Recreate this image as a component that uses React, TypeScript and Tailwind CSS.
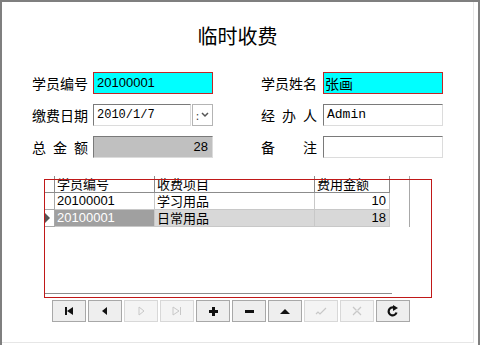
import React from "react";

const cjk = "font-['Noto_Sans_CJK_SC',sans-serif]";
const sans = "font-['Liberation_Sans','Noto_Sans_CJK_SC',sans-serif]";
const mono = "font-['Liberation_Mono',monospace]";

function Label({ chars }: { chars: string[] }) {
  return (
    <div className={`w-[56px] flex justify-between text-[14px] leading-none text-black ${cjk}`}>
      {chars.map((c, i) => (
        <span key={i}>{c}</span>
      ))}
    </div>
  );
}

const sunken =
  "h-[22px] border border-t-[#7a7a7a] border-l-[#7a7a7a] border-r-[#dcdcdc] border-b-[#dcdcdc] flex items-center";

function NavIcon({ kind }: { kind: string }) {
  const dark = "#111";
  const faint = "#c8c8c8";
  switch (kind) {
    case "first":
      return (
        <svg width="12" height="12" viewBox="0 0 12 12">
          <rect x="2" y="2" width="2" height="8" fill={dark} />
          <polygon points="10,2 4,6 10,10" fill={dark} />
        </svg>
      );
    case "prev":
      return (
        <svg width="12" height="12" viewBox="0 0 12 12">
          <polygon points="8,2 3,6 8,10" fill={dark} />
        </svg>
      );
    case "next":
      return (
        <svg width="12" height="12" viewBox="0 0 12 12">
          <polygon points="4,2 9,6 4,10" fill="none" stroke={faint} strokeWidth="1" />
        </svg>
      );
    case "last":
      return (
        <svg width="12" height="12" viewBox="0 0 12 12">
          <polygon points="2,2 8,6 2,10" fill="none" stroke={faint} strokeWidth="1" />
          <rect x="9" y="2" width="1" height="8" fill={faint} />
        </svg>
      );
    case "add":
      return (
        <svg width="12" height="12" viewBox="0 0 12 12">
          <rect x="5" y="2" width="3" height="9" fill={dark} />
          <rect x="2" y="5" width="9" height="3" fill={dark} />
        </svg>
      );
    case "del":
      return (
        <svg width="12" height="12" viewBox="0 0 12 12">
          <rect x="2" y="5" width="9" height="3" fill={dark} />
        </svg>
      );
    case "up":
      return (
        <svg width="12" height="12" viewBox="0 0 12 12">
          <polygon points="1,9 6,4 11,9" fill={dark} />
        </svg>
      );
    case "ok":
      return (
        <svg width="14" height="12" viewBox="0 0 14 12">
          <polyline points="2,9 4,7 6,9 12,3" fill="none" stroke={faint} strokeWidth="1.2" />
        </svg>
      );
    case "cancel":
      return (
        <svg width="12" height="12" viewBox="0 0 12 12">
          <path d="M2 2 L10 10 M10 2 L2 10" stroke={faint} strokeWidth="1.2" fill="none" />
          <path d="M3 2 L10 9 M9 2 L2 9" stroke="#e0e0e0" strokeWidth="1" fill="none" />
        </svg>
      );
    default:
      return (
        <svg width="12" height="12" viewBox="0 0 12 12">
          <path d="M9.5 7.5 A4 4 0 1 1 7 2.6" fill="none" stroke={dark} strokeWidth="2.2" />
          <polygon points="6,0 11,3 6,6" fill={dark} />
        </svg>
      );
  }
}

const buttons = [
  { k: "first", on: true },
  { k: "prev", on: true },
  { k: "next", on: false },
  { k: "last", on: false },
  { k: "add", on: true },
  { k: "del", on: true },
  { k: "up", on: true },
  { k: "ok", on: false },
  { k: "cancel", on: false },
  { k: "refresh", on: true },
];

const rows = [
  { id: "20100001", item: "学习用品", amt: "10", sel: false },
  { id: "20100001", item: "日常用品", amt: "18", sel: true },
];

export default function App() {
  return (
    <div className="w-[480px] h-[345px] bg-white border-t-2 border-l-2 border-r-2 border-[#7f7f7f]">
      <div className="w-[472px] h-[341px] border-r border-b border-[#e6e6e6] flex flex-col">
        {/* Title */}
        <div className={`mt-[21px] h-[26px] leading-[26px] text-center text-[20px] text-black ${cjk}`}>
          临时收费
        </div>

        {/* Form */}
        <div className="mt-[23px] flex flex-col gap-[10px] pl-[30px]">
          <div className="flex items-center">
            <Label chars={["学员编号"]} />
            <div className={`ml-[5px] w-[120px] h-[22px] bg-[#00ffff] border border-[#c02828] flex items-center px-[3px] text-[13px] ${sans}`}>
              20100001
            </div>
            <div className="ml-[48px]">
              <Label chars={["学员姓名"]} />
            </div>
            <div className={`ml-[6px] w-[120px] h-[22px] bg-[#00ffff] border border-[#c02828] flex items-center px-[1px] text-[14px] ${cjk}`}>
              张画
            </div>
          </div>

          <div className="flex items-center">
            <Label chars={["缴费日期"]} />
            <div className={`ml-[5px] w-[98px] bg-white px-[3px] text-[12px] ${mono} ${sunken}`}>2010/1/7</div>
            <div className="ml-[1px] w-[21px] h-[22px] bg-white border border-[#b4b4b4] flex items-center justify-center gap-[2px] text-[11px] text-[#333]">
              <span className="leading-none">:</span>
              <svg width="8" height="6" viewBox="0 0 8 6">
                <polyline points="1,1 4,4 7,1" fill="none" stroke="#555" strokeWidth="1.5" />
              </svg>
            </div>
            <div className="ml-[48px]">
              <Label chars={["经", "办", "人"]} />
            </div>
            <div className={`ml-[6px] w-[120px] bg-white px-[3px] text-[13px] ${mono} ${sunken}`}>Admin</div>
          </div>

          <div className="flex items-center">
            <Label chars={["总", "金", "额"]} />
            <div className={`ml-[5px] w-[120px] bg-[#c0c0c0] justify-end px-[4px] text-[13px] ${sans} ${sunken}`}>28</div>
            <div className="ml-[48px]">
              <Label chars={["备", "注"]} />
            </div>
            <div className={`ml-[6px] w-[120px] bg-white ${sunken}`} />
          </div>
        </div>

        {/* Grid */}
        <div className="relative ml-[42px] mt-[18px] w-[390px] h-[119px] flex flex-col">
          <div className={`flex h-[17px] text-[13px] leading-[16px] ${cjk}`}>
            <div className="w-[11px] border-r border-b border-[#8c8c8c]" />
            <div className="w-[100px] border-r border-b border-[#8c8c8c] pl-[2px]">学员编号</div>
            <div className="w-[160px] border-r border-b border-[#8c8c8c] pl-[2px]">收费项目</div>
            <div className="w-[75px] border-r border-b border-[#8c8c8c] pl-[2px]">费用金额</div>
            <div className="w-[20px] border-r border-[#a8a8a8]" />
          </div>
          {rows.map((r, i) => (
            <div key={i} className="flex h-[17px] leading-[16px]">
              <div className="w-[11px] border-r border-b border-[#a8a8a8] flex items-center">
                {r.sel && (
                  <svg width="7" height="10" viewBox="0 0 7 10">
                    <polygon points="1,0 6,5 1,10" fill="#555" />
                  </svg>
                )}
              </div>
              <div
                className={`w-[100px] border-r border-b border-[#c8c8c8] pl-[2px] text-[13px] ${sans} ${
                  r.sel ? "bg-[#a0a0a0] text-white" : "bg-white text-black"
                }`}
              >
                {r.id}
              </div>
              <div className={`w-[160px] border-r border-b border-[#c8c8c8] pl-[2px] text-[13px] ${cjk} ${r.sel ? "bg-[#d8d8d8]" : "bg-white"}`}>
                {r.item}
              </div>
              <div className={`w-[75px] border-r border-b border-[#c8c8c8] pr-[3px] text-right text-[13px] ${sans} ${r.sel ? "bg-[#d8d8d8]" : "bg-white"}`}>
                {r.amt}
              </div>
              <div className="w-[20px] border-r border-[#a8a8a8]" />
            </div>
          ))}
          <div className="flex-1" />
          <div className="w-[348px] border-b border-[#8c8c8c]" />
          <div className="h-[1px]" />
          <div className="absolute left-0 top-[3px] w-[388px] h-[119px] border border-[#c01818] pointer-events-none" />
        </div>

        {/* Navigator */}
        <div className="ml-[50px] mt-[5px] flex gap-[2px]">
          {buttons.map((b) => (
            <div
              key={b.k}
              className={`w-[34px] h-[22px] flex items-center justify-center border ${
                b.on ? "border-[#a8a8a8] bg-[#eeeeee]" : "border-[#d8d8d8] bg-[#f4f4f4]"
              }`}
            >
              <NavIcon kind={b.k} />
            </div>
          ))}
        </div>
      </div>
    </div>
  );
}
